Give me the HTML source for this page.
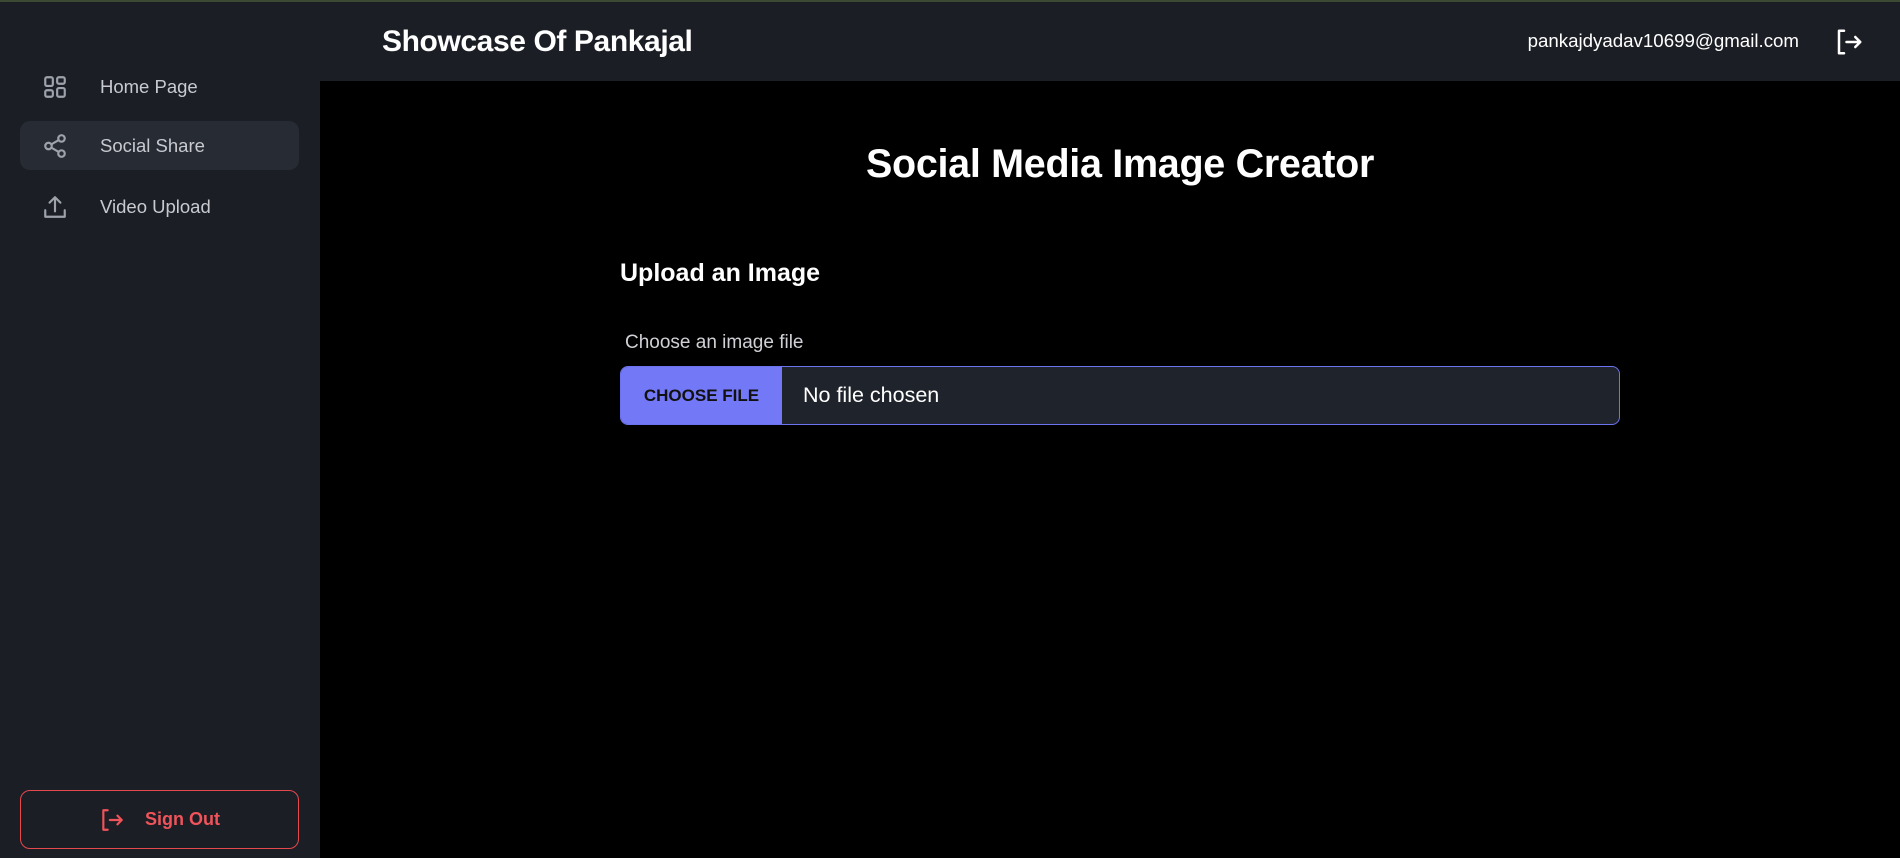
<!DOCTYPE html>
<html><head><meta charset="utf-8"><style>
*{box-sizing:border-box;margin:0;padding:0}
body{width:1900px;height:858px;overflow:hidden;background:#000;font-family:"Liberation Sans",sans-serif;position:relative;color:#fff}
.top{position:absolute;left:0;top:0;width:1900px;height:2px;background:#3d4a33}
.side{position:absolute;left:0;top:2px;width:320px;height:856px;background:#1b1e25}
.hdr{position:absolute;left:320px;top:2px;width:1580px;height:79px;background:#1b1e25}
.brand{position:absolute;left:382px;top:25px;font-size:30px;font-weight:bold;letter-spacing:-0.4px}
.email{position:absolute;right:101px;top:30px;font-size:18.7px}
.nav{position:absolute;left:20px;width:279px;height:49px;border-radius:10px;display:flex;align-items:center;color:#c8cad0;font-size:18.5px}
.nav svg{position:absolute;left:22px}
.nav span{position:absolute;left:80px}
.active{background:#272b34}
h1{position:absolute;left:320px;width:1600px;text-align:center;top:142px;font-size:39.5px;font-weight:bold;letter-spacing:-0.3px}
h2{position:absolute;left:620px;top:259px;font-size:25px;font-weight:bold}
.lbl{position:absolute;left:625px;top:332px;font-size:19px;color:#cfd1d6}
.inp{position:absolute;left:620px;top:366px;width:1000px;height:59px;border:1px solid #6d72ee;border-radius:8px;background:#1f232b;overflow:hidden;display:flex;align-items:center}
.btn{width:161px;height:100%;background:#7378f6;color:#111;font-weight:bold;font-size:17px;display:flex;align-items:center;justify-content:center}
.nf{margin-left:21px;font-size:21.5px}
.so{position:absolute;left:20px;top:790px;width:279px;height:59px;border:1.5px solid #e5484d;border-radius:10px;color:#f0535a;font-size:18px;font-weight:bold}
.so svg{position:absolute;left:78px;top:16px}
.so span{position:absolute;left:124px;top:18px}
</style></head><body>
<div class="top"></div>
<div class="side"></div>
<div class="hdr"></div>
<div class="brand">Showcase Of Pankajal</div>
<div class="email">pankajdyadav10699@gmail.com</div>
<svg style="position:absolute;left:1834px;top:27px" width="30" height="30" viewBox="0 0 24 24" fill="none" stroke="#fff" stroke-width="2" stroke-linecap="round" stroke-linejoin="round"><path d="M8 3H4v18h4M10 12h11M17 8l4 4-4 4"/></svg>

<div class="nav" style="top:62px"><svg width="26" height="26" viewBox="0 0 24 24" fill="none" stroke="#9ea2ab" stroke-width="2"><rect x="3" y="3" width="7" height="8" rx="1.5"/><rect x="14" y="3" width="7" height="6" rx="1.5"/><rect x="14" y="13" width="7" height="8" rx="1.5"/><rect x="3" y="15" width="7" height="6" rx="1.5"/></svg><span>Home Page</span></div>
<div class="nav active" style="top:121px"><svg width="26" height="26" viewBox="0 0 24 24" fill="none" stroke="#9ea2ab" stroke-width="2"><circle cx="18" cy="5" r="3"/><circle cx="6" cy="12" r="3"/><circle cx="18" cy="19" r="3"/><path d="M8.6 13.5l6.8 4M15.4 6.5l-6.8 4"/></svg><span style="top:14px">Social Share</span></div>
<div class="nav" style="top:182px"><svg width="26" height="26" viewBox="0 0 24 24" fill="none" stroke="#9ea2ab" stroke-width="2" stroke-linecap="round" stroke-linejoin="round"><path d="M3 15v6h18v-6M12 3v13M7 8l5-5 5 5"/></svg><span>Video Upload</span></div>

<h1>Social Media Image Creator</h1>
<h2>Upload an Image</h2>
<div class="lbl">Choose an image file</div>
<div class="inp"><div class="btn">CHOOSE FILE</div><div class="nf">No file chosen</div></div>

<div class="so"><svg width="26" height="26" viewBox="0 0 24 24" fill="none" stroke="#f0535a" stroke-width="2" stroke-linecap="round" stroke-linejoin="round"><path d="M8 3H4v18h4M10 12h11M17 8l4 4-4 4"/></svg><span>Sign Out</span></div>
</body></html>
